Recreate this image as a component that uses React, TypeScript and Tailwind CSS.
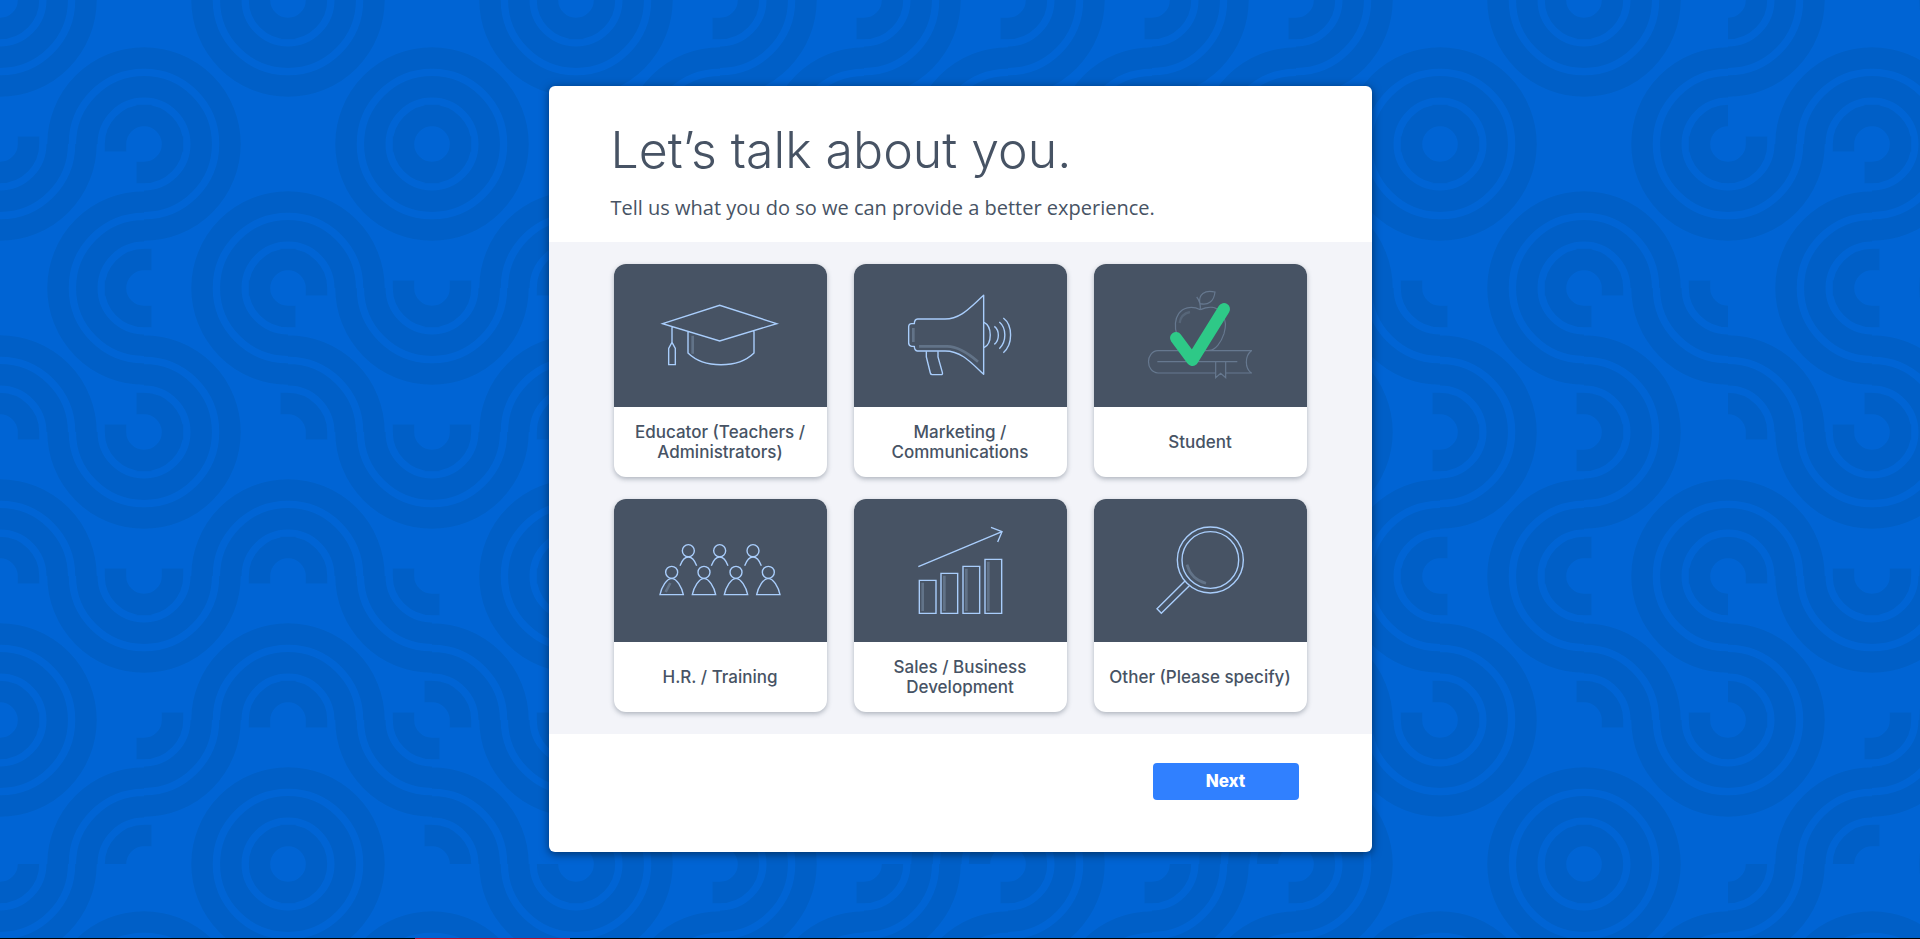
import React, { useState } from 'react';

const CELL = 144;

/* Each letter is one cell: "A" bends around its top-left and bottom-right
   corners, "B" around its top-right and bottom-left corners. */
const CELL_ROWS = [
  'ABABAAAAAABA',
  'AABAAAAAABAB',
  'BBBAAAAAABBB',
  'BABAAAAAAAAA',
  'BABBAAAAABBB',
  'AABBBBABABAB',
];

function cellPath(kind: string, column: number, row: number): string {
  const x = column * CELL;
  const y = row * CELL;
  const right = x + CELL;
  const bottom = y + CELL;
  const corners =
    kind === 'A'
      ? [
          { cx: x, cy: y, dx: 1, dy: 1 },
          { cx: right, cy: bottom, dx: -1, dy: -1 },
        ]
      : [
          { cx: right, cy: y, dx: -1, dy: 1 },
          { cx: x, cy: bottom, dx: 1, dy: -1 },
        ];
  return corners
    .map(({ cx, cy, dx, dy }) => {
      const sweep = dx * dy > 0 ? 1 : 0;
      const arc = (r: number) => `A${r} ${r} 0 0 ${sweep} ${cx} ${cy + dy * r}`;
      const small = 28.5;
      const tail = 7.5;
      return [
        `M${cx + dx * small} ${cy - dy * tail}V${cy}${arc(small)}H${cx - dx * tail}`,
        `M${cx + dx * 57.2} ${cy}${arc(57.2)}`,
        `M${cx + dx * 86} ${cy}${arc(86)}`,
      ].join('');
    })
    .join('');
}

const WAVES = CELL_ROWS.flatMap((row, y) =>
  row.split('').map((kind, x) => cellPath(kind, x, y)),
).join('');

function Backdrop() {
  return (
    <svg aria-hidden="true" className="absolute inset-0 h-full w-full">
      <defs>
        <pattern id="waves" width="1728" height="864" patternUnits="userSpaceOnUse">
          <path d={WAVES} fill="none" stroke="#005fc7" strokeWidth="21.5" />
        </pattern>
      </defs>
      <rect width="100%" height="100%" fill="url(#waves)" />
    </svg>
  );
}

function Art({ children, faded = false }: { children: React.ReactNode; faded?: boolean }) {
  return (
    <svg
      viewBox="42 27 639 429"
      aria-hidden="true"
      className="h-full w-full"
      fill="none"
      stroke={faded ? '#66788f' : '#a9cdfb'}
      strokeWidth={faded ? 3.6 : 4.2}
    >
      {children}
    </svg>
  );
}

const SHADE = '#627388';

const CapArt = () => (
  <Art>
    <path d="M274 242h8v54h-8z" fill={SHADE} stroke="none" />
    <path d="M188 206 359 151l171 55-171 52zM216 216v46l-10 18v49h20v-49l-10-18M264 230v64c48 47 150 47 198 0v-65" />
  </Art>
);

const MegaphoneArt = () => (
  <Art>
    <path d="M220 219v42M237 274h85c34 0 64 22 92 46" stroke={SHADE} strokeWidth="8" />
    <path
      d="M431 121v237c-40-38-68-70-116-70h-83q-9-1-9-14h-8q-9-1-9-10v-48q0-10 9-10h8q0-13 10-14h82c48 0 76-36 116-71z"
      strokeLinejoin="round"
    />
    <path d="M259 289v17l12 48q1 5 6 5h26q6 0 4-7l-13-46v-17M432 202c25 12 25 64 0 76M463 214c16 12 16 41 0 54M478 201c22 18 22 60 0 80M490 189c29 22 29 80 0 104" />
  </Art>
);

const StudentArt = () => (
  <Art faded>
    <path d="M299 204q3-27 31-33" stroke="#566578" strokeWidth="7" />
    <path d="M361 164c-28-14-54-5-65 12-15 22-11 46-5 66 8 27 26 47 48 44M361 164c26-12 50-9 64 10 16 24 12 44 7 62-8 25-26 52-47 50M350 126q12 14 11 38M360 146c-6-28 14-42 45-35-3 28-20 41-45 35z" />
    <path d="M516 287H234c-38 2-38 64 0 67h172M438 354h78M514 287c-20 16-20 52 0 67M232 320h240M407 320v48l15-13 15 13v-48" />
    <path
      d="M288 249l49 66 95-153"
      stroke="#2ec987"
      strokeWidth="36"
      strokeLinecap="round"
      strokeLinejoin="round"
    />
  </Art>
);

const PeopleArt = () => (
  <Art>
    <path d="m211 279-14 27" stroke={SHADE} strokeWidth="8" />
    {[265, 359, 459].map((x) => (
      <g key={x}>
        <circle cx={x} cy="182" r="18" />
        <path d={`M${x - 25} 227q10-26 25-26t25 26`} />
      </g>
    ))}
    {[215, 312, 408, 505].map((x) => (
      <g key={x}>
        <circle cx={x} cy="247" r="18" />
        <path d={`M${x} 265c-15 1-30 25-35 49h70c-5-24-20-48-35-49z`} />
      </g>
    ))}
  </Art>
);

const ChartArt = () => (
  <Art>
    {[
      [238, 271],
      [303, 250],
      [369, 229],
      [435, 208],
    ].map(([x, y]) => (
      <g key={x}>
        <path d={`M${x + 10} ${y + 7}V363`} stroke={SHADE} strokeWidth="8" />
        <path d={`M${x} ${y}h50V370h-50z`} />
      </g>
    ))}
    <path d="m235 230 251-105M453 112l33 13-13 31" />
  </Art>
);

const MagnifierArt = () => (
  <Art>
    <path d="M321 224q12 44 57 56" stroke={SHADE} strokeWidth="8" />
    <circle cx="391" cy="210" r="99" />
    <circle cx="391" cy="210" r="85" />
    <path d="m315 273-84 83 13 14 84-83" />
  </Art>
);

const ROLES = [
  { id: 'educator', label: 'Educator (Teachers / Administrators)', Picture: CapArt },
  { id: 'marketing', label: 'Marketing / Communications', Picture: MegaphoneArt },
  { id: 'student', label: 'Student', Picture: StudentArt },
  { id: 'hr', label: 'H.R. / Training', Picture: PeopleArt },
  { id: 'sales', label: 'Sales / Business Development', Picture: ChartArt },
  { id: 'other', label: 'Other (Please specify)', Picture: MagnifierArt },
];

export default function App() {
  const [role, setRole] = useState('student');

  return (
    <div className="relative flex min-h-screen flex-col bg-[#0064d4] font-['Inter','Open_Sans',sans-serif] text-[#475364]">
      <Backdrop />
      <main className="relative flex flex-1 items-center justify-center">
        <form
          className="w-full max-w-[823px] overflow-hidden rounded-md bg-white shadow-[0_2px_10px_rgba(0,0,0,0.5)]"
          onSubmit={(event) => event.preventDefault()}
        >
          <header className="px-[62px] pt-8 pb-[18px]">
            <h1 className="text-[50px] leading-[64px] font-light">Let’s talk about you.</h1>
            <p className="pt-[10px] font-['Open_Sans',sans-serif] text-xl leading-8">
              Tell us what you do so we can provide a better experience.
            </p>
          </header>
          <fieldset
            aria-label="What you do"
            className="grid grid-cols-3 gap-x-[27px] gap-y-[22px] bg-[#f3f4f9] px-[65px] py-[22px]"
          >
            {ROLES.map(({ id, label, Picture }) => (
              <label
                key={id}
                className="relative flex aspect-square cursor-pointer flex-col overflow-hidden rounded-xl bg-white shadow-[0_2px_5px_rgba(71,83,100,0.4)]"
              >
                <input
                  type="radio"
                  name="role"
                  value={id}
                  checked={role === id}
                  onChange={() => setRole(id)}
                  className="sr-only"
                />
                <span className="block h-[143px] bg-[#475364]">
                  <Picture />
                </span>
                <span className="flex flex-1 items-center justify-center px-3 text-center text-[17px] leading-5 font-medium">
                  {label}
                </span>
              </label>
            ))}
          </fieldset>
          <footer className="flex justify-end px-[73px] pt-[29px] pb-[52px]">
            <button
              type="submit"
              className="h-[37px] w-[146px] rounded bg-[#3080ff] text-[17px] font-extrabold text-white"
            >
              Next
            </button>
          </footer>
        </form>
      </main>
      <div className="relative flex h-px bg-black">
        <div className="ml-[415px] w-[155px] bg-[#b01030]" />
      </div>
    </div>
  );
}
